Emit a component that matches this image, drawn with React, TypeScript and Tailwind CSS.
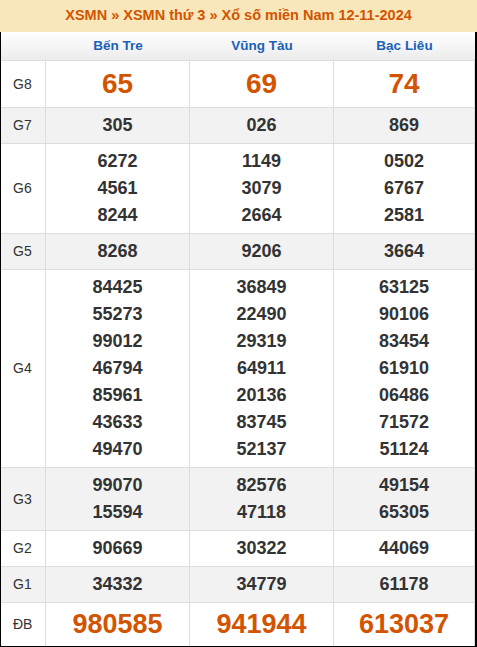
import React from "react";

type Row = {
  label: string;
  values: string[][];
  gray?: boolean;
  big?: boolean;
  size?: string;
};

const rows: Row[] = [
  { label: "G8", values: [["65"], ["69"], ["74"]], big: true, size: "text-[28px] h-[46px]" },
  { label: "G7", values: [["305"], ["026"], ["869"]], gray: true },
  {
    label: "G6",
    values: [
      ["6272", "4561", "8244"],
      ["1149", "3079", "2664"],
      ["0502", "6767", "2581"],
    ],
  },
  { label: "G5", values: [["8268"], ["9206"], ["3664"]], gray: true },
  {
    label: "G4",
    values: [
      ["84425", "55273", "99012", "46794", "85961", "43633", "49470"],
      ["36849", "22490", "29319", "64911", "20136", "83745", "52137"],
      ["63125", "90106", "83454", "61910", "06486", "71572", "51124"],
    ],
  },
  {
    label: "G3",
    values: [
      ["99070", "15594"],
      ["82576", "47118"],
      ["49154", "65305"],
    ],
    gray: true,
  },
  { label: "G2", values: [["90669"], ["30322"], ["44069"]] },
  { label: "G1", values: [["34332"], ["34779"], ["61178"]], gray: true },
  { label: "ĐB", values: [["980585"], ["941944"], ["613037"]], big: true, size: "text-[27px] h-[43px]" },
];

const colWidths = ["w-[144px]", "w-[144px]", "flex-1"];

export default function App() {
  return (
    <main className="w-[477px] h-[647px] bg-white font-['Liberation_Sans',Arial,sans-serif] overflow-hidden">
      <div className="h-[32px] bg-[#f8e7ba] flex items-center justify-center text-[14.5px] font-bold text-[#d35400]">
        XSMN » XSMN thứ 3 » Xổ số miền Nam 12-11-2024
      </div>
      <div className="border-l border-black border-r-2 border-b-2">
        <div className="flex h-[29px] border-b border-[#dddddd] bg-gradient-to-b from-white to-[#ececec] text-[13.5px] font-bold text-[#1a62b8]">
          <div className="w-[45px]" />
          {["Bến Tre", "Vũng Tàu", "Bạc Liêu"].map((n, i) => (
            <div key={n} className={`${colWidths[i]} flex items-center justify-center`}>
              {n}
            </div>
          ))}
        </div>
        {rows.map((r) => (
          <div
            key={r.label}
            className={`flex border-b last:border-b-0 border-[#dddddd] ${r.gray ? "bg-[#f2f2f2]" : "bg-white"}`}
          >
            <div className="w-[45px] shrink-0 border-r border-[#dddddd] flex items-center pl-[12px] text-[14px] text-[#333333]">
              {r.label}
            </div>
            {r.values.map((vals, i) => (
              <div
                key={i}
                className={`${colWidths[i]} border-r border-[#dddddd] flex flex-col items-center justify-center font-bold ${
                  r.big ? `${r.size} text-[#d35400]` : "py-[4px] text-[18px] leading-[27px] text-[#333333]"
                }`}
              >
                {vals.map((v) => (
                  <span key={v}>{v}</span>
                ))}
              </div>
            ))}
          </div>
        ))}
      </div>
    </main>
  );
}
